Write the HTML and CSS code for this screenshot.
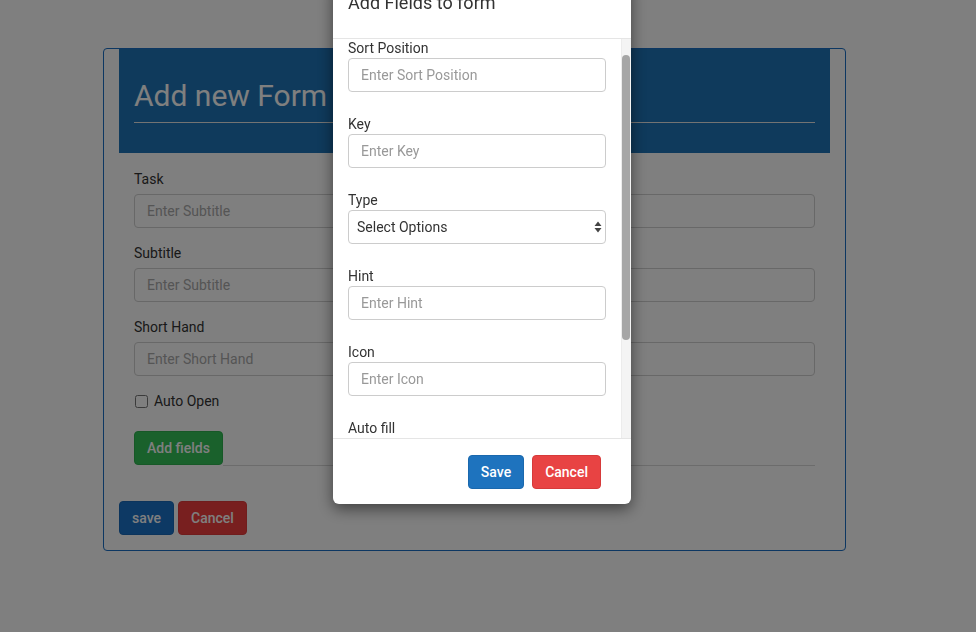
FILE: index.html
```html
<!DOCTYPE html>
<html lang="en">
<head>
<meta charset="utf-8">
<title>Add new Form</title>
<link rel="stylesheet" href="styles.css">
</head>
<body>
<div class="card">
  <div class="card-header">
    <h1 class="card-title">Add new Form</h1>
    <hr class="title-rule">
  </div>
  <form class="form">
    <div class="group">
      <label class="label">Task</label>
      <input class="input" type="text" placeholder="Enter Subtitle">
    </div>
    <div class="group">
      <label class="label">Subtitle</label>
      <input class="input" type="text" placeholder="Enter Subtitle">
    </div>
    <div class="group">
      <label class="label">Short Hand</label>
      <input class="input" type="text" placeholder="Enter Short Hand">
    </div>
    <div class="check-row">
      <input class="checkbox" type="checkbox" id="auto-open">
      <label class="check-label" for="auto-open">Auto Open</label>
    </div>
    <div class="fields-row">
      <button type="button" class="btn btn-success">Add fields</button>
      <div class="fields-rule"></div>
    </div>
  </form>
  <div class="actions">
    <button type="button" class="btn btn-primary-dark">save</button>
    <button type="button" class="btn btn-danger-dark">Cancel</button>
  </div>
</div>

<div class="backdrop"></div>

<div class="modal">
  <div class="modal-header">
    <h4 class="modal-title">Add Fields to form</h4>
  </div>
  <div class="modal-body">
    <div class="modal-content">
      <div class="m-group">
        <label class="m-label">Sort Position</label>
        <input class="m-input" type="text" placeholder="Enter Sort Position">
      </div>
      <div class="m-group">
        <label class="m-label">Key</label>
        <input class="m-input" type="text" placeholder="Enter Key">
      </div>
      <div class="m-group">
        <label class="m-label">Type</label>
        <div class="select-wrap">
          <select class="m-select">
            <option>Select Options</option>
          </select>
          <svg class="select-arrows" width="8" height="12" viewBox="0 0 8 12"><path d="M4 0.5 L7.5 5 L0.5 5 Z M4 11.5 L7.5 7 L0.5 7 Z" fill="#444"/></svg>
        </div>
      </div>
      <div class="m-group">
        <label class="m-label">Hint</label>
        <input class="m-input" type="text" placeholder="Enter Hint">
      </div>
      <div class="m-group">
        <label class="m-label">Icon</label>
        <input class="m-input" type="text" placeholder="Enter Icon">
      </div>
      <div class="m-group">
        <label class="m-label">Auto fill</label>
        <input class="m-input" type="text" placeholder="">
      </div>
    </div>
    <div class="scrollbar"><div class="thumb"></div></div>
  </div>
  <div class="modal-footer">
    <button type="button" class="btn btn-primary">Save</button>
    <button type="button" class="btn btn-danger">Cancel</button>
  </div>
</div>
</body>
</html>
```

FILE: styles.css
```css
* { box-sizing: border-box; }

html, body {
  margin: 0;
  height: 100%;
  background: #ffffff;
  font-family: Roboto, "Liberation Sans", Arial, sans-serif;
  font-size: 14px;
  color: #333;
  overflow: hidden;
}

.card {
  margin: 48px 0 0 103px;
  width: 743px;
  height: 503px;
  border: 1px solid #1a6ec4;
  border-radius: 4px;
  padding: 0 15px 15px;
  display: flex;
  flex-direction: column;
}

.card-header {
  background: #1e74b8;
  padding: 30px 15px 30px;
}

.card-title {
  margin: 0;
  font-size: 30px;
  font-weight: 400;
  line-height: 33px;
  color: #ffffff;
}

.title-rule {
  margin: 10px 0 0;
  border: 0;
  border-top: 1px solid #e6e6e6;
}

.form {
  padding: 16px 15px 0;
  margin: 0;
}

.group {
  margin-bottom: 15px;
}

.label {
  display: block;
  line-height: 20px;
  margin-bottom: 5px;
}

.input {
  display: block;
  width: 100%;
  height: 34px;
  padding: 6px 12px;
  border: 1px solid #d0d0d0;
  border-radius: 4px;
  font-family: inherit;
  font-size: 14px;
  color: #333;
  background: #fff;
}

.input::placeholder { color: #aaa; }

.check-row {
  display: flex;
  align-items: center;
  height: 20px;
  margin-bottom: 20px;
}

.checkbox {
  margin: 0 6px 0 1px;
  width: 13px;
  height: 13px;
}

.check-label {
  line-height: 20px;
}

.fields-row {
  display: flex;
  align-items: flex-end;
}

.fields-rule {
  flex: 1;
  border-top: 1px solid #d8d8d8;
  margin-bottom: -1px;
}

.actions {
  margin-top: 36px;
  display: flex;
  gap: 4px;
}

.btn {
  height: 34px;
  padding: 0 12px;
  border: 1px solid transparent;
  border-radius: 4px;
  font-family: inherit;
  font-size: 14px;
  font-weight: 500;
  color: #fff;
  line-height: 32px;
}

.btn-success { background: #34c258; border-color: #2eb04f; }
.btn-primary-dark { background: #1a72c8; border-color: #1868b8; }
.btn-danger-dark { background: #f03f3f; border-color: #e03a3a; }

.btn-primary { background: #1e73be; border-color: #1a68ad; }
.btn-danger { background: #e84343; border-color: #d63a3a; }

.backdrop {
  position: fixed;
  inset: 0;
  background: rgba(0, 0, 0, 0.5);
}

.modal {
  position: fixed;
  left: 333px;
  top: -19px;
  width: 298px;
  background: #fff;
  border-radius: 6px;
  box-shadow: 0 5px 15px rgba(0, 0, 0, 0.5);
  display: flex;
  flex-direction: column;
}

.modal-header {
  height: 58px;
  padding: 12px 15px 0;
  border-bottom: 1px solid #e5e5e5;
}

.modal-title {
  margin: 0;
  font-size: 18px;
  font-weight: 400;
  line-height: 20px;
  color: #333;
}

.modal-body {
  display: flex;
  height: 399px;
  overflow: hidden;
}

.modal-content {
  flex: 1;
  padding: 0 15px;
  margin-top: -1px;
  overflow: hidden;
}

.m-group {
  margin-bottom: 22px;
}

.m-label {
  display: block;
  line-height: 20px;
  color: #333;
}

.m-input, .m-select {
  display: block;
  width: 100%;
  height: 34px;
  padding: 6px 12px;
  border: 1px solid #ccc;
  border-radius: 4px;
  font-family: inherit;
  font-size: 14px;
  color: #333;
  background: #fff;
}

.m-input::placeholder { color: #999; }

.select-wrap {
  position: relative;
}

.m-select {
  appearance: none;
  -webkit-appearance: none;
  padding-left: 8px;
  background: #fff;
}

.select-arrows {
  position: absolute;
  right: 4px;
  top: 11px;
}

.scrollbar {
  width: 10px;
  background: #f4f4f4;
  border-left: 1px solid #ececec;
  padding-top: 16px;
}

.thumb {
  width: 8px;
  height: 285px;
  background: #a6a6a6;
  border-radius: 4px;
}

.modal-footer {
  border-top: 1px solid #e5e5e5;
  padding: 16px 30px 15px 15px;
  display: flex;
  justify-content: flex-end;
  gap: 8px;
}
```
